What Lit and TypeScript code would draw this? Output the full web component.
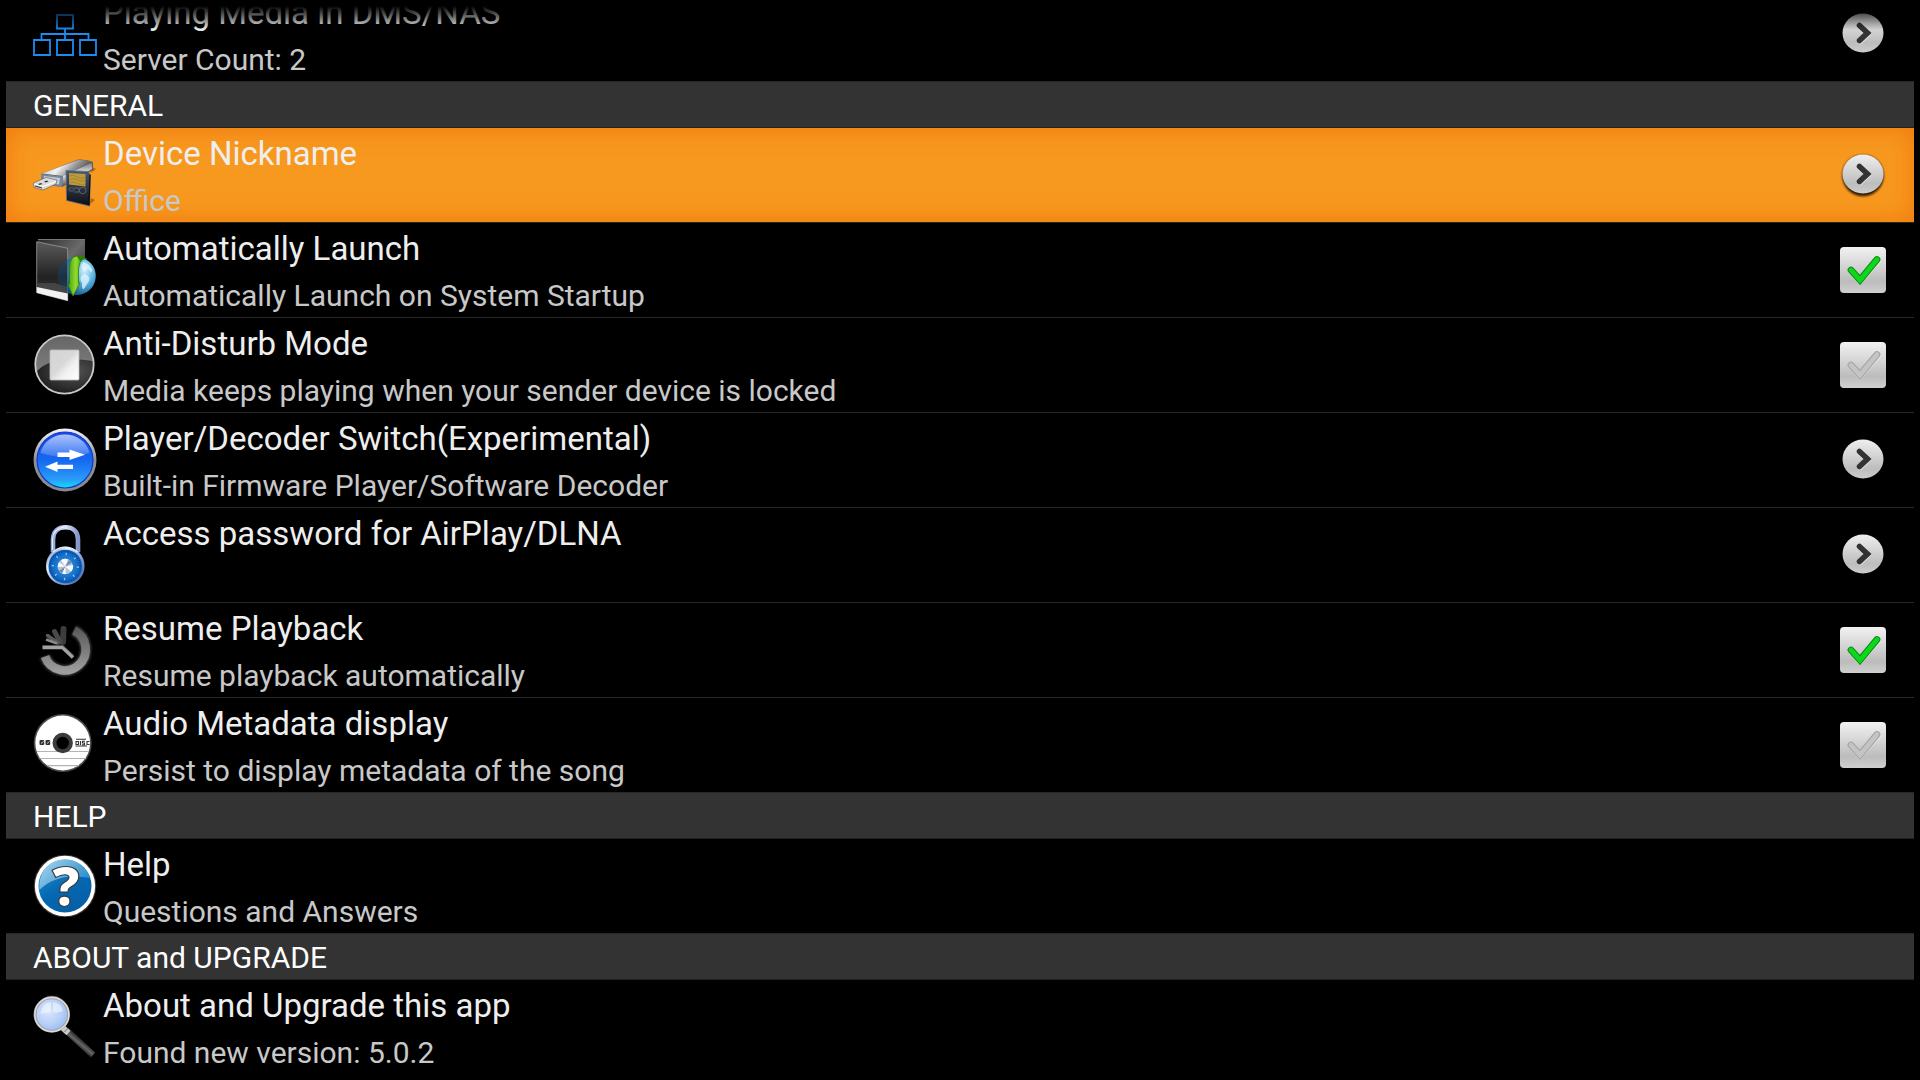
import { LitElement, html, svg, css, nothing, TemplateResult } from "lit";
import { customElement, state } from "lit/decorators.js";

type Control = "open" | "check";

interface Setting {
  id: string;
  icon: TemplateResult;
  title: string;
  summary: string;
  control?: Control;
}

interface Section {
  heading?: string;
  items: Setting[];
}

const networkIcon = svg`
  <g fill="none" stroke="#1c8cf0" stroke-width="1.800">
    <path d="M32 27V37M8.500 37V32H55.500V37" />
    <path d="M24 13H40V26.500H24ZM1 38H17V53H1ZM24 38H40V53H24ZM47 38H63V53H47Z" />
  </g>`;

const usbIcon = svg`
  <defs>
    <linearGradient id="usb-top" x1="0" y1="0" x2="1" y2="0.300">
      <stop offset="0" stop-color="#a5a5a5" /><stop offset=".45" stop-color="#f2f2f2" />
      <stop offset=".7" stop-color="#9a9a9a" /><stop offset="1" stop-color="#4c4c4c" />
    </linearGradient>
    <linearGradient id="usb-side" x1="0" y1="0" x2="0" y2="1">
      <stop offset="0" stop-color="#777" /><stop offset=".5" stop-color="#f4f4f4" /><stop offset="1" stop-color="#555" />
    </linearGradient>
    <linearGradient id="usb-card" x1="0" y1="0" x2="0" y2="1">
      <stop offset="0" stop-color="#4a5a72" /><stop offset=".5" stop-color="#2c3440" /><stop offset="1" stop-color="#0c0e12" />
    </linearGradient>
  </defs>
  <path d="M56 62L62 57L58 55ZM58 30L63 26L59 24Z" fill="#8a4a06" opacity=".6" />
  <path d="M8 31L45 16.500Q54 16 60 19V27L29 44L9 41Z" fill="#5d5d5d" />
  <path d="M9 30.500L45 17Q54 16.500 59 19L30 33Z" fill="url(#usb-top)" />
  <path d="M30 33L59 19.500V26L29 43Z" fill="url(#usb-side)" />
  <path d="M8 31L30 33.500L29 44L8.500 40Z" fill="#7888a0" />
  <path d="M11 33L27 35L26 41.500L11 38.500Z" fill="#c3ccd8" />
  <path d="M.500 40L13 34.500L24 37L23 41L10 47L1 44.500Z" fill="#dcdcdc" stroke="#666" stroke-width=".7" />
  <path d="M1 41L10 43.500L23 38.500" fill="none" stroke="#fff" stroke-width="1" />
  <path d="M5 41L8 40L9.500 41L6.500 42ZM11 38.500L14 37.500L15.500 38.500L12.500 39.500Z" fill="#333" />
  <path d="M2 43L9 45" stroke="#333" stroke-width="1.200" />
  <path d="M33 27.500L54.500 28.500L57.500 31.500L56.500 63L33.500 57.500Z" fill="url(#usb-card)" stroke="#5c7090" stroke-width=".8" />
  <path d="M57 32L56 62.500" stroke="#0c0f14" stroke-width="1.200" />
  <path d="M36 30L52.500 31V43.500L36 41.500Z" fill="#bd9a3a" />
  <path d="M36 33Q40 31 44 34T52.500 34M36 36.500Q41 34.500 45 37T52.500 37M36 39.500Q40 38 45 40.500T52.500 40.500" fill="none" stroke="#9c7c26" stroke-width=".7" />
  <g fill="none" stroke="#6f7681" stroke-width=".7">
    <rect x="36" y="45" width="5" height="3" rx="1.500" /><path d="M41 45H46V49H41" />
    <circle cx="49.700" cy="47.500" r="3.300" />
  </g>`;

const launchIcon = svg`
  <defs>
    <linearGradient id="ln-back" x1="0" y1="0" x2="1" y2="1">
      <stop offset="0" stop-color="#2a2a2a" /><stop offset=".5" stop-color="#6a6a6a" /><stop offset="1" stop-color="#1a1a1a" />
    </linearGradient>
    <linearGradient id="ln-front" x1="0" y1="0" x2="0" y2="1">
      <stop offset="0" stop-color="#5a5a5a" /><stop offset=".6" stop-color="#222" /><stop offset="1" stop-color="#3c3c3c" />
    </linearGradient>
    <radialGradient id="ln-globe" cx=".6" cy=".35" r=".75">
      <stop offset="0" stop-color="#d8f1fc" /><stop offset=".45" stop-color="#5db6e2" /><stop offset="1" stop-color="#0b4d84" />
    </radialGradient>
    <linearGradient id="ln-arrow" x1="0" y1="0" x2="1" y2="0">
      <stop offset="0" stop-color="#3f9a0c" /><stop offset=".5" stop-color="#93dc30" /><stop offset="1" stop-color="#3d970d" />
    </linearGradient>
  </defs>
  <path d="M5 1H52V55H5Z" fill="url(#ln-back)" />
  <path d="M5 1.500H52" stroke="#777" stroke-width="1" />
  <path d="M3.700 3.700L34.700 10.300V62.700L3.700 54.700Z" fill="url(#ln-front)" stroke="#999" stroke-width=".8" />
  <path d="M5 45H22L34 49V56L5 50Z" fill="#555" opacity=".6" />
  <path d="M3.700 49L34.700 55.500V62.700L3.700 54.700Z" fill="#f1f1f1" />
  <path d="M34.700 21.300A19 19 0 1 1 34.700 54.700Z" fill="url(#ln-globe)" />
  <path d="M34.700 21.300A19 19 0 0 0 34.700 54.700Z" fill="#0b4d84" opacity=".35" />
  <path d="M50 24Q55 25 58.500 30Q60 34 58 34L55 31L51 33L48 29ZM49 37Q53 35 56 39Q57 43 54 46Q51 52 50 51Q48.500 49 49 45Q46 41 49 37Z" fill="#e4f5fc" opacity=".75" />
  <path d="M51 19Q46 23 45.500 32V45H47L40 58L34.500 46H36.500V29Q37 18.500 44 18Q49 17.500 51 19Z" fill="url(#ln-arrow)" stroke="#2b7a08" stroke-width=".8" />
  <path d="M44 18Q49 17.500 51 19L54 21Q50 20.500 47.500 24Z" fill="#2d7f0a" />`;

const stopIcon = svg`
  <defs>
    <linearGradient id="st-bg" x1="0" y1="0" x2="0" y2="1">
      <stop offset="0" stop-color="#666" /><stop offset="1" stop-color="#8a8a8a" />
    </linearGradient>
    <radialGradient id="st-low" cx=".65" cy=".35" r=".7">
      <stop offset="0" stop-color="#555" /><stop offset="1" stop-color="#1d1d1d" />
    </radialGradient>
    <linearGradient id="st-sq" x1="0" y1="0" x2="1" y2="1">
      <stop offset="0" stop-color="#d4d4d4" /><stop offset=".45" stop-color="#d8d8d8" /><stop offset=".65" stop-color="#f1f1f1" /><stop offset="1" stop-color="#fff" />
    </linearGradient>
  </defs>
  <circle cx="31.500" cy="31.500" r="29" fill="url(#st-bg)" />
  <path d="M4 38Q20 22 60 28Q62 46 48 55Q30 66 12 53Q5 46 4 38Z" fill="url(#st-low)" />
  <circle cx="31.500" cy="31.500" r="29.200" fill="none" stroke="#c9c9c9" stroke-width="1.800" />
  <rect x="17" y="17" width="29" height="30" rx="1" fill="url(#st-sq)" stroke="#bbb" stroke-width=".8" />`;

const switchIcon = svg`
  <defs>
    <linearGradient id="sw-rim" x1="0" y1="0" x2="0" y2="1">
      <stop offset="0" stop-color="#f4f4f4" /><stop offset=".5" stop-color="#8f8f8f" /><stop offset="1" stop-color="#8a8a8a" />
    </linearGradient>
    <linearGradient id="sw-bg" x1="0" y1="0" x2="0" y2="1">
      <stop offset="0" stop-color="#1646e8" /><stop offset=".5" stop-color="#1668f0" /><stop offset=".85" stop-color="#2a9cf8" /><stop offset="1" stop-color="#12e0f4" />
    </linearGradient>
    <linearGradient id="sw-gloss" x1="0" y1="0" x2="0" y2="1">
      <stop offset="0" stop-color="#c8d8ff" /><stop offset="1" stop-color="#3f7cf4" />
    </linearGradient>
  </defs>
  <circle cx="32" cy="32" r="31.500" fill="url(#sw-rim)" />
  <circle cx="32" cy="32" r="28" fill="url(#sw-bg)" stroke="#1238c8" stroke-width="1.200" />
  <path d="M32 6.500C44 6.500 54 14 56.500 25Q44 29 32 29T7.500 25C10 14 20 6.500 32 6.500Z" fill="url(#sw-gloss)" opacity=".85" />
  <path d="M24.500 24.500H36.500V21.500L52 26.700L36.500 32V29H24.500ZM40 36.700H24.500V33.500L12 38.700L24.500 44V41H40Z" fill="#fff" />`;

const lockIcon = svg`
  <defs>
    <linearGradient id="lk-sh" x1="0" y1="0" x2="1" y2="0">
      <stop offset="0" stop-color="#8fa6d4" /><stop offset=".5" stop-color="#dfe8fa" /><stop offset="1" stop-color="#8397c8" />
    </linearGradient>
    <linearGradient id="lk-rim" x1="0" y1="0" x2="1" y2="1">
      <stop offset="0" stop-color="#4f6cb4" /><stop offset=".3" stop-color="#e8eefb" /><stop offset=".6" stop-color="#8a9fd0" /><stop offset="1" stop-color="#3d5aa4" />
    </linearGradient>
    <radialGradient id="lk-dial"><stop offset="0" stop-color="#2f9cec" /><stop offset="1" stop-color="#0a5cb8" /></radialGradient>
  </defs>
  <path d="M20 29V16.500C20 8 25.500 4.300 32.500 4.300S45 8 45 16.500V29" fill="none" stroke="url(#lk-sh)" stroke-width="4.600" />
  <path d="M19.500 27V16C20 9 25 5 31 4" fill="none" stroke="#fff" stroke-width="1.200" opacity=".8" />
  <circle cx="32.300" cy="43" r="19.300" fill="url(#lk-rim)" />
  <path d="M20 29Q32 19 44.500 29" fill="none" stroke="#eef3ff" stroke-width="1.200" />
  <circle cx="32.300" cy="43.500" r="16.800" fill="url(#lk-dial)" />
  <circle cx="32.300" cy="43.500" r="15" fill="none" stroke="#083c86" stroke-width="1.600" stroke-dasharray=".7 1.660" />
  <circle cx="32.300" cy="43.500" r="12.500" fill="none" stroke="#d5eaff" stroke-width="2.400" stroke-dasharray="1.100 8.717" opacity=".8" />
  <circle cx="32.300" cy="43.500" r="7.700" fill="#b4c6de" />
  <path d="M32.300 43.500L28 37.200A7.700 7.700 0 0 1 35 36.300ZM32.300 43.500L40 42A7.700 7.700 0 0 1 38 48.700ZM32.300 43.500L33 51A7.700 7.700 0 0 1 27 49ZM32.300 43.500L24.700 44A7.700 7.700 0 0 1 26 39.300Z" fill="#f7fafe" />
  <path d="M32.300 43.500L36 37A7.700 7.700 0 0 1 39 39.800ZM32.300 43.500L29 50.500L26 48Z" fill="#7189ab" />`;

const resumeIcon = svg`
  <defs>
    <linearGradient id="rs-ring" x1="0" y1="0" x2="0" y2="1">
      <stop offset="0" stop-color="#5c5c5c" /><stop offset="1" stop-color="#9c9c9c" />
    </linearGradient>
    <filter id="rs-glow" x="-20%" y="-20%" width="140%" height="140%"><feGaussianBlur stdDeviation="1.200" /></filter>
  </defs>
  <path d="M41 12.500A21 21 0 1 1 12 38.500" fill="none" stroke="#777" stroke-width="11" filter="url(#rs-glow)" opacity=".55" />
  <path d="M41 12.500A21 21 0 1 1 12 38.500" fill="none" stroke="url(#rs-ring)" stroke-width="8.600" />
  <g stroke="#3c3c3c" stroke-linecap="round" fill="none">
    <path d="M30 24L30.500 11" stroke-width="6" /><path d="M27 24L21.500 13.500" stroke-width="5" stroke="#494949" />
    <path d="M25 25L14.500 17.500" stroke-width="3.500" stroke="#5a5a5a" />
  </g>
  <path d="M13 21.500L24 25.500" stroke="#888" stroke-width="2.500" />
  <path d="M9.500 29.500H29.500L40 39.500" fill="none" stroke="#a2a2a2" stroke-width="3.600" />
  <path d="M9.500 27.500H30L41 37.500" fill="none" stroke="#555" stroke-width="1" />`;

const discIcon = svg`
  <circle cx="29.700" cy="30" r="29" fill="#4a4a4a" />
  <circle cx="29.700" cy="30" r="27.400" fill="#fff" />
  <path d="M4 38.500H56M6.500 45.500H53M14 52.700H46" stroke="#b4b4b4" stroke-width="1.200" />
  <circle cx="29.700" cy="30" r="8.200" fill="#000" stroke="#3c3c3c" stroke-width="4" />
  <rect x="6.500" y="27" width="4.700" height="5" rx="1" fill="#333" />
  <rect x="12.500" y="27" width="4.700" height="5" rx="1" fill="#333" />
  <path d="M8 30.500L10.500 28.500M14 30.500L16.500 28.500" stroke="#ddd" stroke-width=".9" />
  <g fill="none" stroke="#333" stroke-width="1.100">
    <path d="M43 26.300H53M43 28.500H45.500V31.500H43ZM47.500 28V32M52 28.300H49.500V30H51.500V31.700H49M56.500 28.500H54V31.500H56.500M42.500 33H54" />
  </g>`;

const helpIcon = svg`
  <defs>
    <linearGradient id="hp-bg" x1="0" y1="0" x2=".6" y2="1">
      <stop offset="0" stop-color="#2b8fce" /><stop offset=".6" stop-color="#0468b2" /><stop offset="1" stop-color="#0560a6" />
    </linearGradient>
    <linearGradient id="hp-gloss" x1="0" y1="0" x2="1" y2=".6">
      <stop offset="0" stop-color="#c4e6f6" /><stop offset="1" stop-color="#2e92ce" />
    </linearGradient>
  </defs>
  <circle cx="32" cy="32" r="31.300" fill="#3a3430" />
  <circle cx="32" cy="32" r="30.200" fill="#fff" />
  <circle cx="32" cy="32" r="26.500" fill="url(#hp-bg)" />
  <path d="M6.500 36C5 18 16 5.500 32 5.500C44 5.500 54 13 57.500 24Q24 18 6.500 36Z" fill="url(#hp-gloss)" opacity=".85" />
  <text x="33" y="52" text-anchor="middle" font-family="Open Sans, sans-serif" font-weight="800" font-size="55" fill="#fff" stroke="#3a3a3a" stroke-width="1.200">?</text>`;

const searchIcon = svg`
  <defs>
    <radialGradient id="sr-lens" cx=".4" cy=".4" r=".7">
      <stop offset="0" stop-color="#dbe7fb" /><stop offset=".6" stop-color="#b4cdf8" /><stop offset="1" stop-color="#8fb4f6" />
    </radialGradient>
    <linearGradient id="sr-handle" gradientUnits="userSpaceOnUse" x1="50" y1="46" x2="45" y2="52">
      <stop offset="0" stop-color="#2e2e2e" /><stop offset=".5" stop-color="#666" /><stop offset="1" stop-color="#262626" />
    </linearGradient>
  </defs>
  <path d="M14 1.500H25" stroke="#222" stroke-width="2" />
  <path d="M33 35L60 60" stroke="url(#sr-handle)" stroke-width="6.500" />
  <path d="M29 32L35.500 38" stroke="#c9c9c9" stroke-width="6" />
  <path d="M31.500 37L35 33" stroke="#777" stroke-width="1" />
  <circle cx="18.800" cy="19.500" r="16.700" fill="url(#sr-lens)" stroke="#a4a4a4" stroke-width="3" />
  <circle cx="18.800" cy="19.500" r="17" fill="none" stroke="#dedede" stroke-width="1.300" />
  <path d="M8 17Q9 8 18 7V17.500Q12 17 8 19ZM20 7Q28 8 30 16Q25 18 20 17.500Z" fill="#f3f7fe" opacity=".6" />`;

const sections: Section[] = [
  {
    items: [
      { id: "dms", icon: networkIcon, title: "Playing Media in DMS/NAS", summary: "Server Count: 2", control: "open" },
    ],
  },
  {
    heading: "GENERAL",
    items: [
      { id: "nickname", icon: usbIcon, title: "Device Nickname", summary: "Office", control: "open" },
      { id: "launch", icon: launchIcon, title: "Automatically Launch", summary: "Automatically Launch on System Startup", control: "check" },
      { id: "disturb", icon: stopIcon, title: "Anti-Disturb Mode", summary: "Media keeps playing when your sender device is locked", control: "check" },
      { id: "decoder", icon: switchIcon, title: "Player/Decoder Switch(Experimental)", summary: "Built-in Firmware Player/Software Decoder", control: "open" },
      { id: "password", icon: lockIcon, title: "Access password for AirPlay/DLNA", summary: "", control: "open" },
      { id: "resume", icon: resumeIcon, title: "Resume Playback", summary: "Resume playback automatically", control: "check" },
      { id: "metadata", icon: discIcon, title: "Audio Metadata display", summary: "Persist to display metadata of the song", control: "check" },
    ],
  },
  { heading: "HELP", items: [{ id: "help", icon: helpIcon, title: "Help", summary: "Questions and Answers" }] },
  {
    heading: "ABOUT and UPGRADE",
    items: [{ id: "about", icon: searchIcon, title: "About and Upgrade this app", summary: "Found new version: 5.0.2" }],
  },
];

@customElement("app-root")
export class AppRoot extends LitElement {
  @state() private selected = "nickname";
  @state() private enabled = new Set(["launch", "resume"]);

  static styles = css`
    :host {
      display: block;
      background: #000;
      font-family: Roboto, "Liberation Sans", sans-serif;
    }
    .screen {
      box-sizing: border-box;
      height: 100vh;
      padding: 6px;
      background: #000;
    }
    .viewport {
      position: relative;
      height: 100%;
      overflow: hidden;
    }
    .viewport::before {
      content: "";
      position: absolute;
      inset: 0 0 auto;
      height: 24px;
      background: linear-gradient(#000, transparent);
      pointer-events: none;
    }
    .content {
      margin-top: -19px;
    }
    .heading {
      margin: 0;
      padding: 2px 27px 0;
      border-bottom: 1px solid #222;
      background: #333;
      color: #fff;
      font-size: 30px;
      font-weight: 400;
      line-height: 43px;
    }
    .list {
      margin: 0;
      padding: 0;
      list-style: none;
    }
    .item {
      border-bottom: 1px solid #282828;
    }
    .row {
      box-sizing: border-box;
      display: flex;
      align-items: center;
      gap: 6px;
      width: 100%;
      padding: 0 27px;
      border: 0;
      background: none;
      color: inherit;
      font: inherit;
      text-align: left;
      cursor: pointer;
      outline: none;
    }
    .selected {
      background: #f7981f;
      box-shadow: inset 0 0 24px #f0780c;
    }
    .icon {
      flex: none;
      width: 64px;
      height: 64px;
      overflow: visible;
    }
    .text {
      flex: 1;
      display: flex;
      flex-direction: column;
      padding-top: 1px;
    }
    .title {
      color: #eee;
      font-size: 33px;
      line-height: 50px;
    }
    .summary {
      min-height: 43px;
      color: #c8c8c8;
      font-size: 30px;
      line-height: 43px;
    }
    .control {
      flex: none;
      display: grid;
      place-items: center;
      width: 48px;
      height: 48px;
    }
    .box,
    .mark {
      grid-area: 1 / 1;
    }
    .box {
      appearance: none;
      width: 46px;
      height: 46px;
      margin: 0;
      border-radius: 4px;
      background: linear-gradient(#f2f2f2, #bcbcbc 75%, #cfcfcf);
      outline: none;
    }
    .mark {
      width: 46px;
      height: 46px;
      pointer-events: none;
    }
    .arrow {
      width: 48px;
      height: 48px;
    }
  `;

  private toggle(id: string) {
    const next = new Set(this.enabled);
    if (!next.delete(id)) next.add(id);
    this.enabled = next;
    this.selected = id;
  }

  private renderArrow() {
    return html`<span class="control">
      <svg class="arrow" viewBox="0 0 48 48" aria-hidden="true">
        <defs>
          <linearGradient id="disc" x1="0" y1="0" x2="0" y2="1">
            <stop offset="0" stop-color="#efefef" />
            <stop offset=".75" stop-color="#bdbdbd" />
            <stop offset="1" stop-color="#cdcdcd" />
          </linearGradient>
          <filter id="drop" x="-20%" y="-20%" width="140%" height="150%">
            <feGaussianBlur stdDeviation="1.200" />
          </filter>
        </defs>
        <circle cx="24" cy="24.500" r="20.800" fill="#000" opacity=".8" filter="url(#drop)" />
        <ellipse cx="24" cy="23" rx="20.500" ry="19.500" fill="url(#disc)" />
        <path d="M21 16L28.500 23.500L21 31" fill="none" stroke="#fff" stroke-width="6.500" stroke-linecap="round" opacity=".5" />
        <path d="M20.500 15.500L28.500 23L20.500 30.500" fill="none" stroke="#333" stroke-width="5.600" stroke-linecap="round" />
      </svg>
    </span>`;
  }

  private renderCheck(id: string) {
    const on = this.enabled.has(id);
    return html`<span class="control">
      <input class="box" type="checkbox" id=${id} .checked=${on} @change=${() => this.toggle(id)} />
      <svg class="mark" viewBox="0 0 46 46" aria-hidden="true">
        <path d="M11.500 23.500L20 33.500L37.500 13.500" fill="none" stroke="#fff" stroke-width="6.800" stroke-linecap="round" opacity=".5" />
        <path d="M11 23L20 33L37 12.500" fill="none" stroke=${on ? "#0c8a14" : "#a2a2a2"} stroke-width="6.800" stroke-linecap="round" />
        <path d="M11 23L20 33L37 12.500" fill="none" stroke=${on ? "#0ed81c" : "#c4c4c4"} stroke-width="4.800" stroke-linecap="round" />
      </svg>
    </span>`;
  }

  private renderSetting(s: Setting) {
    const cls = s.id === this.selected ? "row selected" : "row";
    const body = html`
      <svg class="icon" viewBox="0 0 64 64" aria-hidden="true">${s.icon}</svg>
      <span class="text">
        <span class="title">${s.title}</span>
        <span class="summary">${s.summary}</span>
      </span>`;
    return html`<li class="item">
      ${s.control === "check"
        ? html`<label class=${cls} for=${s.id}>${body}${this.renderCheck(s.id)}</label>`
        : html`<button class=${cls} type="button" @click=${() => (this.selected = s.id)}>
            ${body}${s.control === "open" ? this.renderArrow() : nothing}
          </button>`}
    </li>`;
  }

  render() {
    return html`<main class="screen">
      <div class="viewport">
        <div class="content">
          ${sections.map(
            (section) => html`<section>
              ${section.heading ? html`<h2 class="heading">${section.heading}</h2>` : nothing}
              <ul class="list">${section.items.map((s) => this.renderSetting(s))}</ul>
            </section>`
          )}
        </div>
      </div>
    </main>`;
  }
}
